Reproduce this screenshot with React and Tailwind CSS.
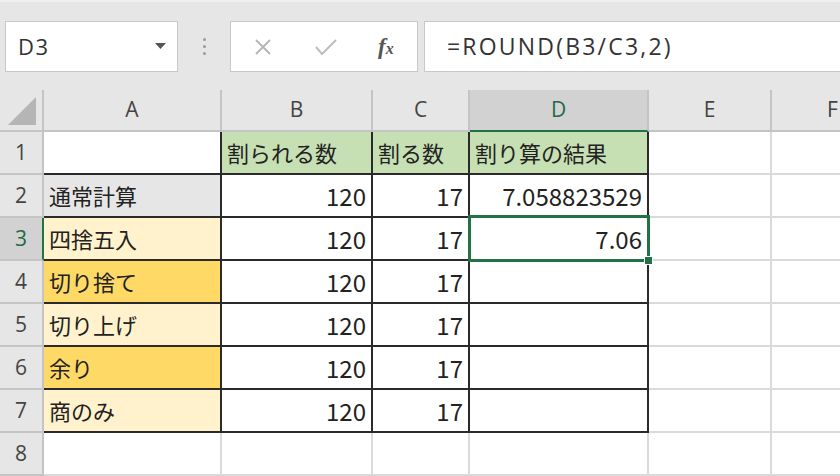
import React from 'react'

const cjk = { fontFamily: '"Noto Sans CJK JP", "Noto Sans", sans-serif' }
const ui = { fontFamily: '"Open Sans", "Noto Sans", sans-serif' }

const cols = ['A', 'B', 'C', 'D', 'E', 'F']

const rows = [
  { a: '', aBg: 'bg-white', b: '割られる数', c: '割る数', d: '割り算の結果', head: true },
  { a: '通常計算', aBg: 'bg-[#e7e6e6]', b: '120', c: '17', d: '7.058823529' },
  { a: '四捨五入', aBg: 'bg-[#fff2cc]', b: '120', c: '17', d: '7.06', sel: true },
  { a: '切り捨て', aBg: 'bg-[#ffd966]', b: '120', c: '17', d: '' },
  { a: '切り上げ', aBg: 'bg-[#fff2cc]', b: '120', c: '17', d: '' },
  { a: '余り', aBg: 'bg-[#ffd966]', b: '120', c: '17', d: '' },
  { a: '商のみ', aBg: 'bg-[#fff2cc]', b: '120', c: '17', d: '' },
]

function TopBar() {
  return (
    <div className="h-[90px] bg-[#e6e6e6] border-t-2 border-[#f0f0f0] flex items-start pt-[19px] pl-[5px] overflow-hidden">
      <div className="w-[173px] h-[51px] shrink-0 bg-white border border-[#c8c8c8] flex items-center justify-between pl-[12px] pr-[11px]">
        <span className="text-[22px] tracking-[1.5px] text-[#333]" style={ui}>D3</span>
        <svg width="11" height="7" viewBox="0 0 11 7"><path d="M0 0h11L5.5 6z" fill="#555" /></svg>
      </div>
      <div className="w-[52px] h-[51px] shrink-0 flex flex-col items-center justify-center gap-[4px]">
        <span className="w-[3px] h-[3px] rounded-full bg-[#9a9a9a]" />
        <span className="w-[3px] h-[3px] rounded-full bg-[#9a9a9a]" />
        <span className="w-[3px] h-[3px] rounded-full bg-[#9a9a9a]" />
      </div>
      <div className="w-[188px] h-[51px] shrink-0 bg-white border border-[#c8c8c8] flex items-center pl-[23px]">
        <svg width="18" height="18" viewBox="0 0 18 18"><path d="M2 2l14 14M16 2L2 16" stroke="#b4b4b4" strokeWidth="1.8" /></svg>
        <svg className="ml-[42px]" width="24" height="18" viewBox="0 0 24 18"><path d="M2 9l6 7L22 2" stroke="#bdbdbd" strokeWidth="2" fill="none" /></svg>
        <span className="ml-[40px] italic font-bold text-[#555] leading-none" style={{ fontFamily: '"Liberation Serif", serif' }}>
          <span className="text-[23px]">f</span><span className="text-[16px]">x</span>
        </span>
      </div>
      <div className="w-[440px] h-[51px] shrink-0 ml-[6px] bg-white border border-[#c8c8c8] flex items-center pl-[22px]">
        <span className="text-[23px] tracking-[2.2px] text-[#333]" style={ui}>=ROUND(B3/C3,2)</span>
      </div>
    </div>
  )
}

function Cell({ children, className = '', num = false }) {
  return (
    <div
      className={`relative flex items-center text-[#222] px-[5px] ${num ? 'justify-end text-[24px]' : 'text-[22px]'} ${className}`}
      style={cjk}
    >
      {children}
    </div>
  )
}

export default function App() {
  return (
    <div className="w-[840px] h-[476px] overflow-hidden bg-white">
      <TopBar />
      <div className="grid grid-cols-[44px_178px_151px_97px_179px_123px_123px] grid-rows-[42px_repeat(8,43px)] w-[895px]">
        {/* header row */}
        <div className="bg-[#e6e6e6] border-r-2 border-b-2 border-[#c4c4c4] flex items-end justify-end pr-[6px] pb-[5px]">
          <svg width="28" height="28" viewBox="0 0 28 28"><path d="M28 0v28H0z" fill="#b5b5b5" /></svg>
        </div>
        {cols.map(c => (
          <div
            key={c}
            className={`flex items-center justify-center text-[21px] border-r-2 border-b-2 ${c === 'D' ? 'bg-[#d2d2d2] text-[#1e6b45] border-r-[#c4c4c4] border-b-[#217346]' : 'bg-[#e6e6e6] text-[#444] border-[#c4c4c4]'}`}
            style={ui}
          >
            {c}
          </div>
        ))}

        {rows.map((r, i) => {
          const line = 'border-r-2 border-b-2 border-[#2a2a2a]'
          const bg = r.head ? 'bg-[#c6e0b4]' : 'bg-white'
          return (
            <React.Fragment key={i}>
              <div
                className={`flex items-center justify-center text-[21px] border-b-2 border-r-2 ${r.sel ? 'bg-[#d2d2d2] text-[#1e6b45] border-b-[#c4c4c4] border-r-[#217346]' : 'bg-[#e6e6e6] text-[#444] border-[#c4c4c4]'}`}
                style={ui}
              >
                {i + 1}
              </div>
              <Cell className={`${r.aBg} ${line}`}>{r.a}</Cell>
              <Cell className={`${bg} ${line}`} num={!r.head}>{r.b}</Cell>
              <Cell className={`${bg} ${line}`} num={!r.head}>{r.c}</Cell>
              <Cell className={`${bg} ${line}`} num={!r.head}>
                {r.d}
                {r.sel && (
                  <>
                    <div className="absolute -left-[2px] -top-[3px] -right-[3px] -bottom-[3px] border-[3px] border-[#217346] z-10" />
                    <div className="absolute left-[174px] top-[38px] w-[9px] h-[9px] bg-[#217346] border border-white z-20" />
                  </>
                )}
              </Cell>
              <div className="border-r-2 border-b-2 border-[#dadada]" />
              <div className="border-r-2 border-b-2 border-[#dadada]" />
            </React.Fragment>
          )
        })}

        {/* row 8 */}
        <div className="flex items-center justify-center text-[21px] bg-[#e6e6e6] text-[#444] border-r-2 border-b-2 border-[#c4c4c4]" style={ui}>8</div>
        {cols.map(c => (
          <div key={c} className="border-r-2 border-b-2 border-[#dadada]" />
        ))}
      </div>
    </div>
  )
}
